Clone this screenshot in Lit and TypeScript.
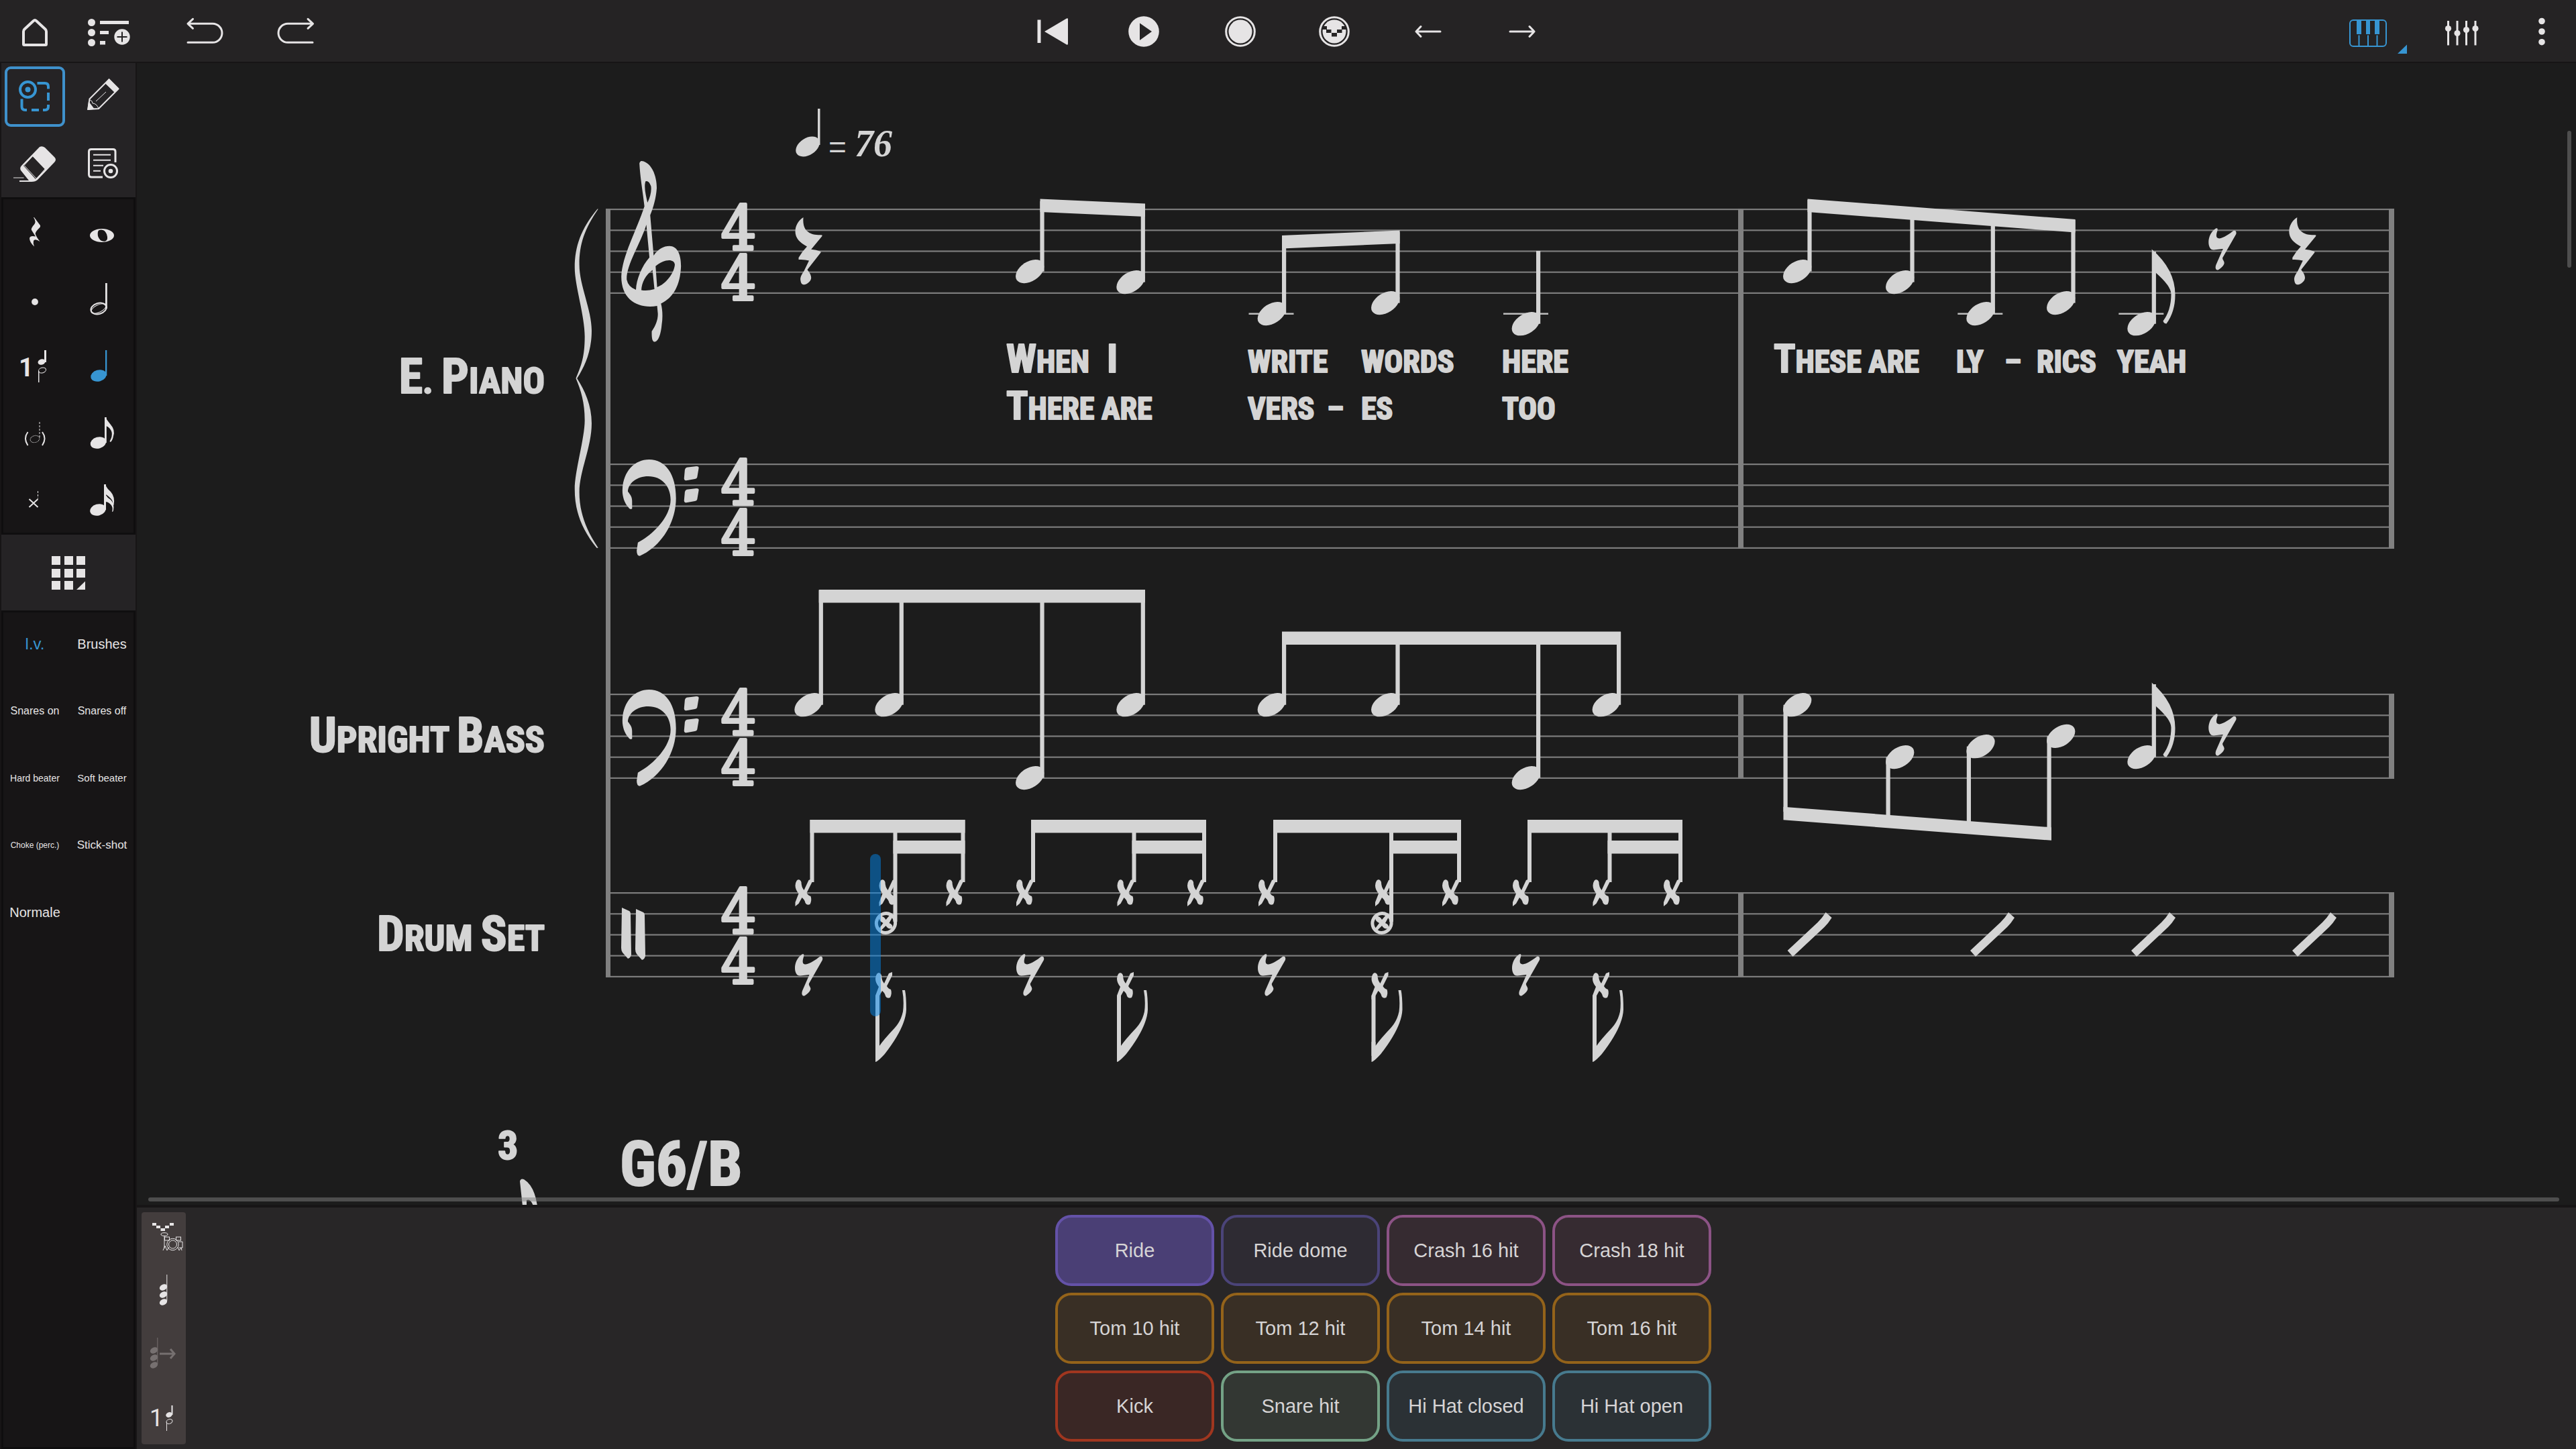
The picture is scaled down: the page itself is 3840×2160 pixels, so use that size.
import { LitElement, html, svg, css } from "lit";
import { customElement } from "lit/decorators.js";

const icon = (x: number, y: number, w: number, h: number, body: unknown) =>
  html`<svg class="icon" viewBox="${x} ${y} ${w} ${h}" aria-hidden="true">${body}</svg>`;

/* ---------- toolbar icons ---------- */

const homeIcon = icon(2, 0, 100, 92, svg`<path class="line w4" d="M35 66V47q0-2 1.500-3.500L50 31q2-2 4 0L67.500 43.500Q69 45 69 47V66q0 1-1 1H36q-1 0-1-1Z"/>`);
const layoutsIcon = icon(112, 0, 100, 92, svg`
  <circle cx="136.500" cy="33.500" r="5.500"/><circle cx="136.500" cy="48.500" r="5.500"/><circle cx="136.500" cy="63.500" r="5.500"/>
  <rect x="149" y="31" width="43" height="5"/><rect x="149" y="46" width="13" height="5"/><rect x="149" y="61" width="8" height="5.500"/>
  <circle cx="182" cy="55" r="11.700"/><path class="cut w2" d="M182 47.500v15M174.500 55h15"/>`);
const undoIcon = icon(255, 0, 100, 92, svg`<path class="line w3 round" d="M280 35.300H317a14 14 0 0 1 0 28H280M287.500 28.300L280 35.300L287.500 42.300"/>`);
const redoIcon = icon(391, 0, 100, 92, svg`<path class="line w3 round" d="M466 35.300H429a14 14 0 0 0 0 28H466M459 28.300L466.500 35.300L459 42.300"/>`);
const rewindIcon = icon(1500, 0, 140, 92, svg`<rect x="1546.500" y="29.500" width="5" height="34.500"/><path d="M1557 47L1590 27.500q2-1 2 1V65q0 2.500-2 1.500Z"/>`);
const playIcon = icon(1640, 0, 140, 92, svg`<circle cx="1705" cy="47" r="22.800"/><path class="cut-fill" d="M1699 34.500V60L1717 47Z"/>`);
const recordIcon = icon(1780, 0, 140, 92, svg`<circle class="line w3" cx="1849" cy="47" r="21.300"/><circle cx="1849" cy="47" r="17.500"/>`);
const midiIcon = icon(1920, 0, 140, 92, svg`<circle class="line w3" cx="1989" cy="47" r="21.300"/><circle cx="1989" cy="47" r="17.500"/>
  <g class="cut-fill"><rect x="1971" y="39" width="7" height="5"/><rect x="1977" y="44" width="7.500" height="5"/><rect x="1985" y="49" width="8" height="5.500"/><rect x="1993" y="44" width="7.500" height="5"/><rect x="2000" y="39" width="7" height="5"/></g>`);
const leftIcon = icon(2060, 0, 140, 92, svg`<path class="line w3 round" d="M2147 47H2111M2118 39.500L2111 47L2118 54.500"/>`);
const rightIcon = icon(2200, 0, 140, 92, svg`<path class="line w3 round" d="M2251 47H2287M2280 39.500L2287 47L2280 54.500"/>`);
const pianoIcon = icon(3460, 0, 140, 92, svg`<rect class="line w2" x="3503" y="30" width="54" height="39" rx="5"/>
  <rect x="3513" y="30" width="7" height="21"/><rect x="3527" y="30" width="6" height="21"/><rect x="3540" y="30" width="7" height="21"/>
  <path class="line w2" d="M3516.500 52.500V69M3530 52.500V69M3543.500 52.500V69"/><path d="M3574 80L3588 66.500V80Z"/>`);
const mixerIcon = icon(3600, 0, 140, 92, svg`<path class="line w3" d="M3649.500 31V67.500M3663 31V67.500M3676.500 31V67.500M3690 31V67.500"/>
  <circle cx="3649.500" cy="42.500" r="4.600"/><circle cx="3663" cy="49.500" r="4.600"/><circle cx="3676.500" cy="44.500" r="4.600"/><circle cx="3690" cy="42.500" r="4.600"/>`);
const moreIcon = icon(3740, 0, 100, 92, svg`<circle cx="3789" cy="31.500" r="4.800"/><circle cx="3789" cy="47" r="4.800"/><circle cx="3789" cy="62.700" r="4.800"/>`);

/* ---------- tool icons ---------- */

const marqueeIcon = icon(7, 99, 90, 90, svg`<circle class="line w4" cx="41.500" cy="133.500" r="11.500"/><circle cx="41.500" cy="133.500" r="4"/>
  <path class="line w4" d="M55.500 124H67q5 0 5 5v3.500M72 138v12M72 156v3q0 5-5 5H64M58 164H47M40 164H37.500q-5 0-5-5V147.500"/>`);
const pencilIcon = icon(102, 94, 100, 100, svg`<path class="line w2 join" d="M131.500 163L133.500 147.500L162.500 118.500L176.500 132.500L147 162Z"/>
  <path d="M162.500 117L177.500 132L171 138L156.500 124Z M130 164L132 151L140 161.500L146 162Z"/>
  <path class="line w2 thin" d="M143 151L158 137M134 149q4 1 4 5q6 0 9 8"/>`);
const eraserIcon = icon(2, 194, 100, 100, svg`<path fill-rule="evenodd" d="M59 219q4-2 8 1L81 234q4 4 0 8L56 268q-3 3-9 3H29v-2h14L31 254q-2-4 1-7ZM48.500 234L36.500 246.500L54.500 265L67 252.500Z"/>
  <path d="M48.500 233L35 247L53 267L67 252.500Z" class="cut-fill"/><path class="line w2 thin" d="M48.500 233L36 246.500L54 266M20 265H35.500M54 267L67 252"/>`);
const propertiesIcon = icon(102, 194, 100, 100, svg`<path class="line w3" d="M172 242V226q0-3.500-3.500-3.500H136q-3.500 0-3.500 3.500V260q0 4 4 4H153"/>
  <path class="line w2" d="M139 230.700H165M139 238.700H165M139 246.700H154M139 254.700H150"/>
  <circle class="line w3" cx="165" cy="255" r="9.500"/><circle cx="165" cy="255" r="3.300"/>`);

/* ---------- note input icons ---------- */

const smallHead = (cx: number, cy: number) => svg`<ellipse cx="${cx}" cy="${cy}" rx="12" ry="8.500" transform="rotate(-16 ${cx} ${cy})"/>`;
const restIcon = icon(4, 297, 96, 100, svg`<path d="M51 324L60 336Q60.500 338 59 339.500Q53 345 52.700 348.500Q54 353 59.500 360Q52 355 50 359Q49 363 51 367.500Q44 361 44 355Q45 350.500 53 352.500L47 343Q46 341 49 337Q53 333 52.500 330Q52 327 50 324Z"/>`);
const wholeIcon = icon(104, 297, 96, 100, svg`<path fill-rule="evenodd" d="M134 351a18 10 0 1 0 36 0a18 10 0 1 0-36 0ZM147 343.500Q155 340 159 349Q162 358 157 359.500Q149 361 146 352Q145 346 147 343.500Z"/>`);
const dotIcon = icon(4, 397, 96, 100, svg`<circle cx="52" cy="450" r="4.900"/>`);
const halfIcon = icon(104, 397, 96, 100, svg`<ellipse class="line w2" cx="147" cy="460" rx="11.800" ry="8" transform="rotate(-16 147 460)"/>
  <ellipse class="line w2 thin" cx="147" cy="460" rx="12" ry="5.500" transform="rotate(-26 147 460)"/><rect x="157" y="422" width="2.800" height="38"/>`);
const voiceIcon = icon(4, 497, 96, 100, svg`<text class="icon-digit" x="28" y="561">1</text>
  <ellipse cx="62" cy="539.500" rx="5.600" ry="4.200" transform="rotate(-16 62 539.500)"/><rect x="66" y="522" width="3" height="18"/>
  <ellipse class="line thin" cx="63" cy="552" rx="5.600" ry="3.800" transform="rotate(-16 63 552)"/><rect x="57" y="553" width="1.500" height="17"/>`);
const quarterIcon = icon(104, 497, 96, 100, svg`${smallHead(147, 560)}<rect x="157" y="522" width="2.300" height="38"/>`);
const ghostIcon = icon(4, 597, 96, 100, svg`<path class="line w2" d="M41.500 644Q34.500 653.500 41.500 664M63 644Q70 653.500 63 664"/>
  <ellipse class="line thin dotted" cx="52" cy="654.500" rx="7" ry="5" transform="rotate(-16 52 654.500)"/><path class="line thin dashed" d="M59 629V652"/>`);
const eighthIcon = icon(104, 597, 96, 100, svg`${smallHead(146.500, 660)}<rect x="156" y="622" width="2.800" height="38"/>
  <path d="M157 622Q160 627 165 633Q172 641 169 650Q168 656 165 659L163.500 658Q168 650 166.500 644Q164 637 158 635Z"/>`);
const crossIcon = icon(4, 697, 96, 100, svg`<path class="line w2" d="M43.500 744L56.500 756M56.500 744L43.500 756"/><path class="line thin dashed" d="M56.500 732V743"/>`);
const sixteenthIcon = icon(104, 697, 96, 100, svg`${smallHead(146, 760)}<rect x="155" y="722" width="3" height="38"/>
  <path d="M157 722Q159 728 165 733Q172 741 169.500 753L168 752Q169 747 165 743Q160 738 157.500 737ZM157 737Q160 742 165 745Q171 751 169 761Q168.500 763 167 763Q169 756 165 752Q161 748 157.500 748Z"/>`);
const paletteIcon = icon(2, 797, 200, 113, svg`${[829, 848, 866].map((y) => [77, 96, 114].map((x) =>
  y === 866 && x === 114 ? svg`<path d="M114 879L127 866.500V879Z"/>` : svg`<rect x="${x}" y="${y}" width="13" height="13"/>`))}`);

/* ---------- pad strip icons ---------- */

const chord = (x: number, y: number) => svg`${[0, 11, 22].map((d) => svg`<ellipse cx="${x}" cy="${y + d}" rx="6" ry="4.300" transform="rotate(-28 ${x} ${y + d})"/>`)}
  <path class="line thin" d="M${x + 5.300} ${y - 19}V${y + 20}"/>`;
const kitIcon = icon(211, 1807, 66, 86, svg`<g><rect x="227" y="1823" width="6" height="4"/><rect x="233" y="1827" width="6" height="4"/><rect x="239.500" y="1831" width="6.500" height="4"/><rect x="246" y="1827" width="6" height="4"/><rect x="253" y="1823" width="6" height="4"/></g>
  <g class="line thin"><ellipse cx="245" cy="1840" rx="5" ry="2.300"/><path d="M245 1842V1861"/><rect x="245.500" y="1844" width="7" height="5"/><rect x="262.500" y="1844" width="7" height="5"/>
  <circle cx="257.500" cy="1855" r="8.700"/><circle cx="257.500" cy="1855" r="6"/><path d="M266 1851h6v9h-5M243 1864l3-7 3 7M249 1864l3-5M267 1864l-2-5M267 1864l3-4 1 4"/></g>`);
const chordIcon = icon(211, 1893, 66, 87, chord(243.500, 1919));
const chordNextIcon = icon(211, 1980, 66, 86, svg`${chord(229.500, 2013)}<path class="line w3" d="M238 2018H260M254 2011L260 2018L254 2025"/>`);
const stripVoiceIcon = icon(211, 2066, 66, 87, svg`<text class="icon-digit small" x="223" y="2126">1</text>
  <ellipse cx="252" cy="2109" rx="4.800" ry="3.800" transform="rotate(-20 252 2109)"/><rect x="255.500" y="2095" width="2" height="14"/>
  <ellipse class="line thin" cx="252.500" cy="2119" rx="4.600" ry="3.300" transform="rotate(-20 252.500 2119)"/><path class="line thin" d="M248.500 2120V2133"/>`);

/* ---------- score ---------- */

const INK_TOP = 94;
const staffTops = [312, 692, 1035, 1331];
const staff = (top: number) => [0, 1, 2, 3, 4].map((i) => svg`<rect class="staff" x="903" y="${top - 1 + i * 31.2}" width="2665" height="2.200"/>`);
const head = (x: number, y: number) => svg`<ellipse cx="${x + 21.2}" cy="${y}" rx="23.400" ry="14.600" transform="rotate(-33 ${x + 21.2} ${y})"/>`;
const up = (x: number, y: number, top: number) => svg`${head(x, y)}<rect x="${x + 36.4}" y="${top}" width="6.200" height="${y - top}"/>`;
const down = (x: number, y: number, bottom: number) => svg`${head(x, y)}<rect x="${x + 0.5}" y="${y}" width="6.200" height="${bottom - y}"/>`;
const beam = (x1: number, y1: number, x2: number, y2: number) => svg`<path d="M${x1} ${y1}L${x2} ${y2}V${y2 + 19.5}L${x1} ${y1 + 19.5}Z"/>`;
const ledger = (x: number) => svg`<rect class="ledger" x="${x}" y="466.500" width="67" height="2.500"/>`;
const flag = (x: number, y: number) => svg`<path d="M${x} ${y}q35 30 35 68q0 25 -13 43q-4 0 -5-4q12-16 12-40q0-12-23-32Z"/>`;
const quarterRest = (x: number, y: number) => svg`<path transform="translate(${x} ${y})" d="M12 0C4 5 0 13 0 21C0 31 7 38 17.500 43.500Q10 51 5 60V63Q14 62.500 20.500 64.500L13 80C9 86 7.500 89 7.700 93C8.500 99 10 101 15 100C20 98 23.700 94 23.700 90C23.700 85 20 81 18 78L38 52.500V51Q31 48 23.700 47.700L40 28V26.500C36 26 28 27 21 23C14 19 11 12 12 0Z"/>`;
const eighthRest = (x: number, y: number) => svg`<path transform="translate(${x} ${y})" d="M10 1C3 6 0 14 0 21C0 28 3 33 8 32.500L21.500 31L11 55C9 61 12 64 15 62C20 59 23 55 23.400 52C23.400 49 20 47 21 44L41 9C42 5 40 3 37 4C32 8 22 15 16 15.500C12 15.500 11 13 12 8C13 4 14 2 13 .5C12 0 11 0 10 1Z"/>`;
const cross = (x: number, y: number) => svg`<path transform="translate(${x} ${y})" d="M2 3C4 0 8 1 9 5Q9 12 13 17L20 2L25 0V5L17 21Q19 25 23 26Q25 32 22 38Q17 40 15 36Q14 31 10 28L5 37L0 41V35L5 22Q0 16 0 10Q0 6 2 3Z"/>`;
const circleCross = (x: number, y: number) => svg`<ellipse class="line w5" cx="${x + 16}" cy="${y}" rx="14" ry="14.500" transform="rotate(30 ${x + 16} ${y})"/><path d="M${x + 6} ${y - 10}q7-1 10 5l6-7 4 3-5 9q6 2 5 8q-6 2-10-4l-7 7-3-3 6-8q-7-3-6-10Z"/>`;
const slash = (x: number) => svg`<path transform="translate(${x} 1360)" d="M57 0L66 8Q61 16 55 22L8 66L0 57L45 15Q52 8 57 0Z"/>`;
const bassClef = (dy: number) => svg`<path transform="translate(820 ${140 + dy}) scale(.574 .4464)" d="M233 1543Q225 1543 225 1525L228 1498C270 1470 313 1410 313 1355C313 1310 290 1277 255 1277C225 1277 203 1300 202 1328C208 1338 213 1345 213 1360V1385Q207 1390 203 1380C192 1365 187 1340 188 1320C190 1260 220 1221 257 1221C300 1221 327 1270 327 1350C327 1430 290 1510 233 1543Z M355 1247L380 1243Q387 1243 386 1250L382 1280Q381 1285 376 1286L354 1291Q348 1291 348 1284L350 1255Q351 1249 355 1247Z M355 1321L380 1317Q387 1317 386 1324L382 1354Q381 1359 376 1360L354 1365Q348 1365 348 1358L350 1329Q351 1323 355 1321Z"/>`;
const drumGroup = (a: number, b: number, c: number, ring: boolean) => {
  const mid = b + (ring ? 27 : 23);
  return svg`${cross(a + 1, 1310)}${cross(b + (ring ? 6 : 1), 1310)}${cross(c + 1, 1310)}${ring ? circleCross(b, 1376) : ""}
    <rect x="${a + 23}" y="1222" width="6" height="93"/><rect x="${mid}" y="1222" width="6" height="${ring ? 152 : 93}"/><rect x="${c + 23}" y="1222" width="6" height="93"/>
    ${beam(a + 23, 1222, c + 29, 1222)}${beam(mid, 1253, c + 29, 1253)}`;
};
const kick = (x: number) => svg`${cross(x, 1449)}<rect x="${x}" y="1484" width="6" height="90"/>
  <path d="M${x} 1583q3 0 14-12q31-40 32-66q0-20-2-29h-4q3 16 1 32q-3 14-12 24q-17 18-23 27v-6h-6Z"/>`;

/* Capitals are drawn larger than the small capitals that follow them. */
const smallCaps = (text: string) => (text.match(/[A-Z]+|[^A-Z]+/g) ?? []).map((run) =>
  /^[A-Z]/.test(run) ? svg`<tspan class="cap">${run}</tspan>` : svg`<tspan class="low">${run}</tspan>`);
const lyric = (x: number, y: number, text: string) => svg`<text class="lyric" x="${x}" y="${y}">${smallCaps(text)}</text>`;
const part = (y: number, text: string) => svg`<text class="part" x="812" y="${y}">${smallCaps(text)}</text>`;

const score = svg`
  <g>${staffTops.map(staff)}</g>
  <g class="bar">
    <rect x="903" y="311" width="7" height="1146"/>
    ${[[311, 507], [1034, 127], [1330, 127]].map(([y, h]) => svg`<rect x="2591" y="${y}" width="8" height="${h}"/><rect x="3561" y="${y}" width="8" height="${h}"/>`)}
  </g>
  <g transform="translate(820 140) scale(.574 .4464)">
    <path d="M123 384C80 450 64 510 64 580C64 640 90 740 90 810C90 880 80 910 67 950C80 990 90 1030 90 1090C90 1150 64 1260 64 1320C64 1390 80 1450 121 1516H125C90 1450 76 1390 76 1330C76 1260 108 1180 108 1100C108 1040 90 990 70 950C90 910 108 860 108 790C108 720 76 640 76 570C76 500 90 450 125 384Z"/>
    <path fill-rule="evenodd" d="M238 224C262 228 277 270 277 315C275 350 268 380 260 405L269 540C280 518 295 508 310 508C330 508 340 535 340 575C338 640 320 680 288 700C292 720 293 745 290 770C288 800 282 825 272 828C264 828 264 810 264 793C274 775 280 755 280 735L278 708C230 718 185 690 185 610C187 540 225 455 245 375C240 320 234 280 232 232Q234 223 238 224Z
      M248 292C243 310 249 340 253 363C260 345 264 325 262 308Q256 288 248 292Z
      M250 437C235 500 198 570 199 620Q203 645 223 654C224 620 238 575 258 546Z
      M274 575L278 645C300 635 322 600 324 570C322 548 295 552 274 575Z
      M266 588C248 605 238 630 237 655Q252 659 271 652Z"/>
  </g>
  ${bassClef(0)}${bassClef(343)}
  <path d="M927 1353l11 5q2 1 2 5l1 60q-1 5-5 6l-8-9q-2-3-2-7ZM948 1355l11 5q2 1 2 5l1 60q-1 5-5 6l-8-9q-2-3-2-7Z"/>
  ${staffTops.map((top) => svg`<text class="meter" x="1101" y="${top + 60}">4</text><text class="meter" x="1101" y="${top + 135}">4</text>`)}

  <ellipse cx="1204" cy="218.500" rx="19.500" ry="12.600" transform="rotate(-33 1204 218.500)"/><rect x="1219" y="162" width="3.500" height="54"/>
  <text class="equals" x="1235" y="235">=</text>
  <text class="tempo" x="1274" y="233">76</text>

  ${quarterRest(1185.5, 324)}
  ${up(1514, 404.6, 300)}${up(1664.3, 420.6, 304)}${beam(1550.5, 296.5, 1707, 303.5)}
  ${ledger(1861.5)}${up(1874.6, 467.6, 352)}${up(2044, 451.6, 346)}${beam(1911, 351, 2086.600, 343.5)}
  ${ledger(2241)}${up(2253.6, 482.7, 374)}
  ${up(2658, 404.6, 298)}${up(2811, 420.6, 310)}${ledger(2918.3)}${up(2931.3, 467.6, 320)}${up(3051, 451.6, 328)}${beam(2694.5, 296.5, 3093.6, 327)}
  ${ledger(3158.3)}${up(3171.3, 482.7, 375)}${flag(3207.5, 371.5)}
  ${eighthRest(3292.3, 340)}${quarterRest(3412.3, 324)}

  ${[1184.3, 1304.3, 1664.3].map((x) => up(x, 1050.7, 880))}${up(1514, 1159.6, 880)}${beam(1220.7, 879, 1707, 879)}
  ${[1874.6, 2044, 2373.6].map((x) => up(x, 1050.7, 942))}${up(2253.6, 1159.6, 942)}${beam(1911, 941.5, 2416, 941.5)}
  ${down(2658, 1050.7, 1210)}${down(2811, 1128.6, 1220)}${down(2931.3, 1112.7, 1230)}${down(3051, 1097.4, 1240)}${beam(2658.5, 1202.8, 3058, 1233.3)}
  ${up(3171.3, 1128.6, 1020)}${flag(3207.5, 1017.5)}${eighthRest(3292.3, 1064)}

  ${drumGroup(1184.5, 1304.5, 1409.5, true)}${drumGroup(1514, 1664.500, 1769, false)}${drumGroup(1875, 2044, 2149, true)}${drumGroup(2254, 2373.500, 2479, false)}
  ${[1185, 1515, 1875, 2254].map((x) => eighthRest(x, 1422))}
  ${[1305, 1665, 2044.500, 2374].map(kick)}
  ${[2664.600, 2937, 3177, 3417].map(slash)}

  ${part(586, "E. Piano")}${part(1121, "Upright Bass")}${part(1417, "Drum Set")}
  ${lyric(1500, 555, "When")}${lyric(1650, 555, "I")}${lyric(1860, 555, "write")}${lyric(2029, 555, "words")}${lyric(2239, 555, "here")}
  ${lyric(1500, 625, "There are")}${lyric(1860, 625, "vers")}${lyric(1978, 625, "–")}${lyric(2029, 625, "es")}${lyric(2239, 625, "too")}
  ${lyric(2644, 555, "These are")}${lyric(2916, 555, "ly")}${lyric(2988, 555, "–")}${lyric(3036, 555, "rics")}${lyric(3156, 555, "yeah")}

  <text class="barno" x="742" y="1728">3</text>
  <text class="chord" x="924" y="1767">G6/B</text>
  <path d="M775 1761Q776 1756 781 1758Q797 1768 801 1798H795Q791 1786 785 1789V1798H779Z"/>
  <rect class="playhead" x="1297" y="1273" width="16" height="242" rx="8"/>`;

const leftTools = [["Home", homeIcon, ""], ["Layouts", layoutsIcon, "after"], ["Undo", undoIcon, "undo"], ["Redo", redoIcon, ""]] as const;
const transport = [["Return to start", rewindIcon], ["Play", playIcon], ["Record", recordIcon], ["MIDI record", midiIcon], ["Nudge left", leftIcon], ["Nudge right", rightIcon]] as const;
const inputCells = [["Rest", restIcon], ["Whole note", wholeIcon], ["Dot", dotIcon], ["Half note", halfIcon], ["Voice 1", voiceIcon], ["Quarter note", quarterIcon],
  ["Ghost note", ghostIcon], ["Eighth note", eighthIcon], ["Cross note", crossIcon], ["Sixteenth note", sixteenthIcon]] as const;
const techniques = [["l.v.", "s24 on"], ["Brushes", "s20"], ["Snares on", "s16"], ["Snares off", "s16"], ["Hard beater", "s14"], ["Soft beater", "s15"],
  ["Choke (perc.)", "s12"], ["Stick-shot", "s17"], ["Normale", "s20"]] as const;
const pads = [["Ride", "ride"], ["Ride dome", "dome"], ["Crash 16 hit", "crash"], ["Crash 18 hit", "crash"], ["Tom 10 hit", "tom"], ["Tom 12 hit", "tom"], ["Tom 14 hit", "tom"], ["Tom 16 hit", "tom"],
  ["Kick", "kick"], ["Snare hit", "snare"], ["Hi Hat closed", "hat"], ["Hi Hat open", "hat"]] as const;

@customElement("app-root")
export class AppRoot extends LitElement {
  static styles = css`
    :host { display: grid; grid-template: 94px minmax(0, 1fr) / 204px minmax(0, 1fr); height: 100vh; background: #171516; color: #e6e4e5; font-family: "Liberation Sans", Arial, sans-serif; }
    button { appearance: none; display: block; margin: 0; padding: 0; border: 0; background: none; color: inherit; font: inherit; cursor: pointer; }
    .icon { display: block; width: 100%; height: 100%; fill: currentColor; }
    .line { fill: none; stroke: currentColor; stroke-width: 2; }
    .w2 { stroke-width: 2; } .w3 { stroke-width: 3; } .w4 { stroke-width: 4; } .w5 { stroke-width: 5; } .thin { stroke-width: 1; }
    .round { stroke-linecap: round; stroke-linejoin: round; }
    .join { stroke-linejoin: round; }
    .dotted { stroke-dasharray: 1 1; } .dashed { stroke-dasharray: 3 2; }
    .cut { stroke: #252324; } .cut-fill { fill: #252324; }
    .icon-digit { font-family: Roboto, sans-serif; font-size: 38px; font-weight: 700; } .icon-digit.small { font-size: 36px; font-weight: 400; }
    .on { color: #3795d2; }
    .dim { color: #767070; }

    .topbar { grid-column: 1 / -1; display: grid; grid-template-columns: 1fr auto 1fr; border-bottom: 2px solid #171516; background: #252324; }
    .group { display: flex; }
    .left { padding-left: 2px; } .right { justify-content: flex-end; }
    .left button { width: 100px; } .left .after { margin: 0 43px 0 10px; } .left .undo { margin-right: 36px; }
    .wide button { width: 140px; } .wide .more { width: 100px; }

    .side { display: flex; flex-direction: column; padding: 0 2px; }
    .tools { display: grid; grid-template-columns: 100px 100px; grid-auto-rows: 100px; background: #252325; }
    .tools .picked { box-sizing: border-box; margin: 5px; border: 4px solid #3f91cc; border-radius: 9px; }
    .picked .icon { width: 90px; height: 90px; margin: -4px; }
    .cells { display: grid; grid-template-columns: 96px 96px; grid-auto-rows: 100px; column-gap: 4px; padding: 3px 2px 0; background: #171516; box-shadow: inset 0 0 0 3px #0f0e0f; }
    .palette { height: 113px; background: #252325; }
    .texts { flex: 1; padding: 0 2px; align-content: start; }
    .texts button { line-height: 24px; white-space: nowrap; text-align: center; }
    .s24 { font-size: 24px; } .s20 { font-size: 20px; } .s17 { font-size: 17px; } .s16 { font-size: 16px; } .s15 { font-size: 15px; } .s14 { font-size: 14px; } .s12 { font-size: 12px; }

    .main { display: flex; flex-direction: column; min-width: 0; }
    .score { position: relative; flex: 1; min-height: 0; overflow: hidden; background: #1c1c1c; }
    .sheet { display: block; width: 100%; height: 100%; fill: #d4d4d4; color: #d4d4d4; }
    .staff { fill: #7c7c7c; } .bar { fill: #808080; } .ledger { fill: #bdbdbd; }
    .playhead { fill: #0086ec; fill-opacity: .5; }
    .thumb { position: absolute; border-radius: 3px; background: #80808080; }
    .thumb.v { top: 101px; right: 7px; width: 6px; height: 204px; }
    .thumb.h { right: 25px; bottom: 5px; left: 17px; height: 6px; }
    .lyric, .part, .barno, .chord { font-family: "Roboto Condensed", "Liberation Sans Narrow", "Open Sans Condensed", "DejaVu Sans Condensed", sans-serif; font-weight: 700; stroke: #d4d4d4; stroke-width: 2; stroke-linejoin: round; }
    .lyric .cap { font-size: 60px; } .lyric .low { font-size: 46px; text-transform: uppercase; }
    .part { text-anchor: end; } .part .cap { font-size: 72px; } .part .low { font-size: 54px; text-transform: uppercase; }
    .barno { font-size: 60px; } .chord { font-size: 92px; }
    .meter { font-family: "DejaVu Serif Condensed", "DejaVu Serif", serif; font-size: 92px; text-anchor: middle; stroke: #d4d4d4; stroke-width: 4; stroke-linejoin: round; }
    .equals { font-size: 46px; }
    .tempo { font-family: "Liberation Serif", serif; font-size: 56px; font-weight: 700; font-style: italic; }

    .panel { display: flex; margin-top: 4px; height: 360px; background: #282627; }
    .strip { display: grid; grid-template-rows: repeat(4, 1fr); width: 66px; margin: 7px; border-radius: 4px; background: #433d3d; }
    .pads { display: grid; flex: 1; grid-template-columns: repeat(4, 237px); grid-auto-rows: 106px; gap: 10px; justify-content: center; align-content: center; }
    .pad { box-sizing: border-box; border: 4px solid; border-radius: 24px; font-size: 29px; line-height: 36px; color: #d6d4d5; }
    .ride { border-color: #6452a8; background: #4a3f75; }
    .dome { border-color: #4b4479; background: #2e2b33; }
    .crash { border-color: #8c5385; background: #362b31; }
    .tom { border-color: #94631a; background: #392f25; }
    .kick { border-color: #a0361f; background: #3a2725; }
    .snare { border-color: #74a286; background: #333733; }
    .hat { border-color: #477a8e; background: #2b3135; }
  `;

  render() {
    return html`
      <header class="topbar">
        <div class="group left">${leftTools.map(([name, glyph, cls]) => html`<button class="${cls}" aria-label="${name}">${glyph}</button>`)}</div>
        <div class="group wide">${transport.map(([name, glyph]) => html`<button aria-label="${name}">${glyph}</button>`)}</div>
        <div class="group wide right">
          <button class="on" aria-label="Instrument panel">${pianoIcon}</button>
          <button aria-label="Mixer">${mixerIcon}</button>
          <button class="more" aria-label="More">${moreIcon}</button>
        </div>
      </header>
      <aside class="side">
        <div class="tools">
          <button class="picked on" aria-label="Select">${marqueeIcon}</button>
          <button aria-label="Pencil">${pencilIcon}</button>
          <button aria-label="Eraser">${eraserIcon}</button>
          <button aria-label="Properties">${propertiesIcon}</button>
        </div>
        <div class="cells">${inputCells.map(([name, glyph]) => html`<button class="${name === "Quarter note" ? "on" : ""}" aria-label="${name}">${glyph}</button>`)}</div>
        <button class="palette" aria-label="Palette">${paletteIcon}</button>
        <div class="cells texts">${techniques.map(([name, cls]) => html`<button class="${cls}">${name}</button>`)}</div>
      </aside>
      <main class="main">
        <section class="score">
          <svg class="sheet" viewBox="204 ${INK_TOP} 3636 1702" preserveAspectRatio="xMinYMin slice">${score}</svg>
          <div class="thumb v"></div>
          <div class="thumb h"></div>
        </section>
        <section class="panel">
          <div class="strip">
            <button aria-label="Drum kit input">${kitIcon}</button>
            <button aria-label="Chord input">${chordIcon}</button>
            <button class="dim" aria-label="Advance chord">${chordNextIcon}</button>
            <button aria-label="Voice">${stripVoiceIcon}</button>
          </div>
          <div class="pads">${pads.map(([name, cls]) => html`<button class="pad ${cls}">${name}</button>`)}</div>
        </section>
      </main>`;
  }
}
